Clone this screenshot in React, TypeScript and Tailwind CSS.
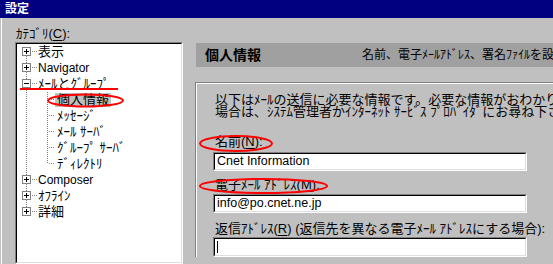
import React from "react";

const GRAY = "#808080";

function Box({ minus }: { minus?: boolean }) {
  return (
    <>
      <rect x={5.5} y={3.5} width={8} height={8} fill="white" stroke={GRAY} />
      <line x1={7} x2={12} y1={7.5} y2={7.5} stroke="black" />
      {!minus && <line x1={9.5} x2={9.5} y1={5} y2={10} stroke="black" />}
    </>
  );
}

function TopRow({
  label,
  minus,
  first,
  last,
  latin,
}: {
  label: string;
  minus?: boolean;
  first?: boolean;
  last?: boolean;
  latin?: boolean;
}) {
  return (
    <div className="flex h-[16px] items-center whitespace-nowrap">
      <svg width={21} height={16} className="shrink-0" shapeRendering="crispEdges">
        {!first && (
          <line x1={9.5} x2={9.5} y1={0} y2={3} stroke={GRAY} strokeDasharray="1 1" />
        )}
        {!last && (
          <line x1={9.5} x2={9.5} y1={12} y2={16} stroke={GRAY} strokeDasharray="1 1" />
        )}
        <line x1={15} x2={21} y1={7.5} y2={7.5} stroke={GRAY} strokeDasharray="1 1" />
        <Box minus={minus} />
      </svg>
      <span className={latin ? "text-[12px]" : "text-[13px]"}>{label}</span>
    </div>
  );
}

function ChildRow({
  label,
  last,
  selected,
}: {
  label: string;
  last?: boolean;
  selected?: boolean;
}) {
  return (
    <div className="flex h-[16px] items-center whitespace-nowrap">
      <svg width={38} height={16} className="shrink-0" shapeRendering="crispEdges">
        <line x1={9.5} x2={9.5} y1={0} y2={16} stroke={GRAY} strokeDasharray="1 1" />
        <line
          x1={30.5}
          x2={30.5}
          y1={0}
          y2={last ? 8 : 16}
          stroke={GRAY}
          strokeDasharray="1 1"
        />
        <line x1={32} x2={38} y1={7.5} y2={7.5} stroke={GRAY} strokeDasharray="1 1" />
      </svg>
      <span
        className={
          "h-[14px] px-[2px] flex items-center text-[13px] " +
          (selected ? "bg-[#c0c0c0]" : "")
        }
      >
        {label}
      </span>
    </div>
  );
}

function Field({
  value,
  tall,
  caret,
}: {
  value?: string;
  tall?: boolean;
  caret?: boolean;
}) {
  return (
    <div
      className={
        "ml-[16px] w-[314px] flex border border-t-[#808080] border-l-[#808080] border-b-white border-r-white " +
        (tall ? "h-[20px]" : "h-[19px]")
      }
    >
      <div className="flex-1 flex items-center bg-white border border-t-black border-l-black border-b-[#dfdfdf] border-r-[#dfdfdf] pl-[2px] text-[12.5px] whitespace-nowrap">
        {caret ? <div className="w-px h-[12px] bg-black" /> : value}
      </div>
    </div>
  );
}

export default function App() {
  return (
    <div className="relative w-[553px] h-[264px] overflow-hidden bg-[#c0c0c0] text-black leading-none font-['Liberation_Sans','Noto_Sans_CJK_JP',sans-serif]">
      {/* title bar */}
      <div className="h-[18px] bg-[#000080] text-white font-bold text-[12px] pl-[5px] flex items-center">
        設定
      </div>

      <div className="flex h-[246px]">
        <div className="w-px bg-[#c0c0c0]" />
        <div className="w-px bg-white" />

        {/* left column */}
        <div className="w-[181px] shrink-0 pl-[13px] flex flex-col">
          <div className="h-[25px] pt-[9px] pl-[1px] text-[13px] leading-[13px] whitespace-nowrap">
            ｶﾃｺﾞﾘ(<span className="underline underline-offset-2">C</span>):
          </div>
          <div className="w-[168px] h-[240px] border border-t-[#808080] border-l-[#808080] border-b-white border-r-white flex">
            <div className="flex-1 bg-white border border-t-black border-l-black border-b-[#dfdfdf] border-r-[#dfdfdf] flex flex-col">
              <TopRow label="表示" first />
              <TopRow label="Navigator" latin />
              <TopRow label="ﾒｰﾙとｸﾞﾙｰﾌﾟ" minus />
              <ChildRow label="個人情報" selected />
              <ChildRow label="ﾒｯｾｰｼﾞ" />
              <ChildRow label="ﾒｰﾙ ｻｰﾊﾞ" />
              <ChildRow label="ｸﾞﾙｰﾌﾟ ｻｰﾊﾞ" />
              <ChildRow label="ﾃﾞｨﾚｸﾄﾘ" last />
              <TopRow label="Composer" latin />
              <TopRow label="ｵﾌﾗｲﾝ" />
              <TopRow label="詳細" last />
            </div>
          </div>
        </div>

        {/* right column */}
        <div className="ml-[12px] flex-1 min-w-0 overflow-hidden flex flex-col">
          <div className="mt-[25px] ml-px h-[24px] bg-[#a0a0a0] flex items-center whitespace-nowrap">
            <div className="w-[166px] shrink-0 pl-[9px] font-bold text-[14px]">個人情報</div>
            <div className="text-[12px]">名前、電子ﾒｰﾙｱﾄﾞﾚｽ、署名ﾌｧｲﾙを設定します。</div>
          </div>

          <div className="mt-[15px] w-[420px] shrink-0 border-t border-l border-[#808080]">
            <div className="border-t border-l border-white pt-[10px] text-[13px] whitespace-nowrap">
              <div className="pl-[18px] leading-[12px]">
                <div>以下はﾒｰﾙの送信に必要な情報です。必要な情報がおわかりにならない</div>
                <div>場合は、ｼｽﾃﾑ管理者かｲﾝﾀｰﾈｯﾄ ｻｰﾋﾞｽ ﾌﾟﾛﾊﾞｲﾀﾞにお尋ね下さい。</div>
              </div>

              <div className="mt-[18px] pl-[18px] h-[12px] leading-[12px]">
                名前(<span className="underline underline-offset-2">N</span>):
              </div>
              <div className="mt-[4px]">
                <Field value="Cnet Information" />
              </div>

              <div className="mt-[8px] pl-[18px] h-[12px] leading-[12px]">
                電子ﾒｰﾙ ｱﾄﾞﾚｽ(<span className="underline underline-offset-2">M</span>):
              </div>
              <div className="mt-[3px]">
                <Field value="info@po.cnet.ne.jp" />
              </div>

              <div className="mt-[10px] pl-[18px] h-[12px] leading-[12px]">
                返信ｱﾄﾞﾚｽ(<span className="underline underline-offset-2">R</span>) (返信先を異なる電子ﾒｰﾙ ｱﾄﾞﾚｽにする場合):
              </div>
              <div className="mt-[2px]">
                <Field tall caret />
              </div>
            </div>
          </div>
        </div>
      </div>

      {/* red annotations */}
      <svg
        className="absolute left-0 top-0 pointer-events-none"
        width={553}
        height={264}
      >
        <rect x={20} y={88} width={98} height={2} fill="#ff0000" />
        <ellipse cx={85.5} cy={100.5} rx={37.5} ry={6} fill="none" stroke="#ff0000" strokeWidth={2} />
        <ellipse cx={236} cy={143.5} rx={36} ry={7.5} fill="none" stroke="#ff0000" strokeWidth={2} />
        <ellipse cx={263.5} cy={186} rx={63.5} ry={7} fill="none" stroke="#ff0000" strokeWidth={2} />
      </svg>
    </div>
  );
}
